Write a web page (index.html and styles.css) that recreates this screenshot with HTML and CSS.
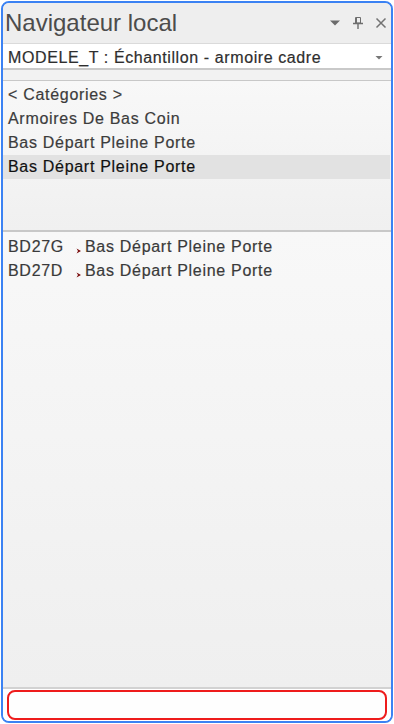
FILE: index.html
```html
<!DOCTYPE html>
<html lang="fr">
<head>
<meta charset="utf-8">
<title>Navigateur local</title>
<link rel="stylesheet" href="styles.css">
</head>
<body>
<div class="frame">
  <div class="titlebar">
    <span class="title">Navigateur local</span>
    <div class="tools">
      <svg class="ico" width="12" height="10" viewBox="0 0 12 10"><path d="M1 2.5h10L6 7.5z" fill="#6b6b6b"/></svg>
      <svg class="ico" width="12" height="12" viewBox="0 0 12 12"><path d="M3.5 0.5h5v5.5h-5z M4.5 1v5" fill="none" stroke="#6e6e6e" stroke-width="1"/><path d="M1 6.5h10" stroke="#6e6e6e" stroke-width="1.4"/><path d="M6 7v5" stroke="#6e6e6e" stroke-width="1.4"/></svg>
      <svg class="ico" width="12" height="12" viewBox="0 0 12 12"><path d="M1.5 1.5l9 9M10.5 1.5l-9 9" stroke="#737373" stroke-width="1.5"/></svg>
    </div>
  </div>
  <div class="combo">
    <span class="combo-text">MODELE_T : Échantillon - armoire cadre</span>
    <svg class="combo-arrow" width="8" height="5" viewBox="0 0 8 5"><path d="M0.5 1h7L4 4.5z" fill="#777"/></svg>
  </div>
  <div class="gap"></div>
  <ul class="cats">
    <li class="cat">&lt; Catégories &gt;</li>
    <li class="cat">Armoires De Bas Coin</li>
    <li class="cat">Bas Départ Pleine Porte</li>
    <li class="cat selected">Bas Départ Pleine Porte</li>
  </ul>
  <div class="sep"></div>
  <ul class="items">
    <li class="item"><span class="code">BD27G</span><svg class="chev" width="6" height="6" viewBox="0 0 6 6"><path d="M0.5 0.5L5 3L0.5 5.5L2 3z" fill="#7a0c0c"/></svg><span class="label">Bas Départ Pleine Porte</span></li>
    <li class="item"><span class="code">BD27D</span><svg class="chev" width="6" height="6" viewBox="0 0 6 6"><path d="M0.5 0.5L5 3L0.5 5.5L2 3z" fill="#7a0c0c"/></svg><span class="label">Bas Départ Pleine Porte</span></li>
  </ul>
  <div class="footline"></div>
  <div class="footer">
    <div class="search"></div>
  </div>
</div>
</body>
</html>
```

FILE: styles.css
```css
html, body {
  margin: 0;
  padding: 0;
  background: #ffffff;
}

.frame {
  box-sizing: border-box;
  margin: 1px 0 0 1px;
  width: 392px;
  height: 722px;
  border: 2px solid #3b82f3;
  border-radius: 8px;
  overflow: hidden;
  display: flex;
  flex-direction: column;
  background: #f0f0f0;
  font-family: "Liberation Sans", Arial, sans-serif;
  color: #3a3a3a;
}

.titlebar {
  box-sizing: border-box;
  height: 41px;
  border-bottom: 1px solid #dadada;
  background: #eeeeee;
  display: flex;
  align-items: center;
  justify-content: space-between;
  padding: 0 4px 0 2px;
  flex: none;
}

.title {
  font-size: 24px;
  line-height: 40px;
  color: #4c4c4c;
  margin-top: -1px;
}

.tools {
  display: flex;
  align-items: center;
  gap: 11px;
  margin-top: -1px;
}

.ico {
  display: block;
}

.combo {
  box-sizing: border-box;
  height: 26px;
  background: #ffffff;
  border-bottom: 2px solid #c9c9c9;
  display: flex;
  align-items: flex-start;
  justify-content: space-between;
  padding: 3px 8px 0 5px;
  flex: none;
}

.combo-text {
  font-size: 16px;
  line-height: 21px;
  letter-spacing: 0.6px;
  color: #2e2e2e;
  white-space: nowrap;
  -webkit-text-stroke: 0.2px #2e2e2e;
}

.combo-arrow {
  display: block;
  margin-top: 8px;
}

.gap {
  height: 10px;
  background: #f2f2f2;
  flex: none;
}

.cats {
  box-sizing: border-box;
  list-style: none;
  margin: 0;
  height: 150px;
  padding: 2px 1px 0 0;
  border-top: 1px solid #c8c8c8;
  background: linear-gradient(#f8f8f8, #f0f0f0);
  flex: none;
}

.cat {
  height: 24px;
  line-height: 24px;
  font-size: 16px;
  letter-spacing: 0.7px;
  padding-left: 5px;
  color: #3c3c3c;
  white-space: nowrap;
  -webkit-text-stroke: 0.2px #3c3c3c;
}

.cat.selected {
  background: #e2e2e2;
  color: #111111;
  -webkit-text-stroke: 0.2px #111111;
}

.sep {
  height: 2px;
  background: #c8c8c8;
  flex: none;
}

.items {
  list-style: none;
  margin: 0;
  padding: 3px 0 0 0;
  flex: 1;
  background: linear-gradient(#f8f8f8, #efefef);
}

.item {
  height: 24px;
  line-height: 24px;
  font-size: 16px;
  letter-spacing: 0.7px;
  padding-left: 5px;
  color: #3a3a3a;
  white-space: nowrap;
  -webkit-text-stroke: 0.2px #3a3a3a;
}

.code {
  display: inline-block;
  width: 68px;
}

.chev {
  vertical-align: -2px;
  margin-right: 3px;
}

.footline {
  height: 2px;
  background: #d2d2d2;
  flex: none;
}

.footer {
  box-sizing: border-box;
  height: 32px;
  padding: 1px 4px 1px 4px;
  background: #ffffff;
  flex: none;
}

.search {
  box-sizing: border-box;
  height: 30px;
  border: 2px solid #ee1c1c;
  border-radius: 8px;
  background: #fefefe;
}
```
